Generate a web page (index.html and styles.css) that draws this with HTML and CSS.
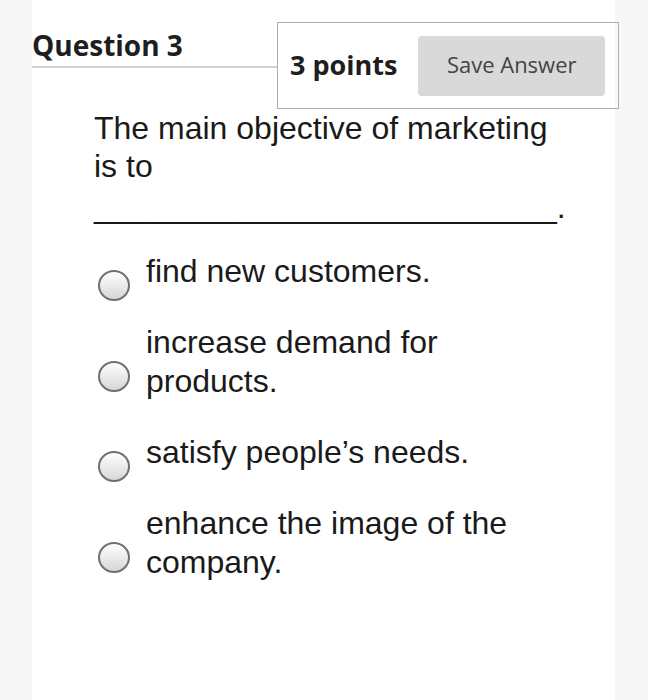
FILE: index.html
```html
<!DOCTYPE html>
<html>
<head>
<meta charset="utf-8">
<link rel="stylesheet" href="styles.css">
</head>
<body>
<div class="page">
  <div class="header">
    <h2 class="title">Question 3</h2>
    <div class="points-box">
      <span class="points">3 points</span>
      <button class="save">Save Answer</button>
    </div>
  </div>
  <div class="question">
    <p class="stem">The main objective of marketing is to</p>
    <p class="blank">__________________________.</p>
  </div>
  <ul class="options">
    <li class="option"><span class="radio"></span><span class="label">find new customers.</span></li>
    <li class="option"><span class="radio"></span><span class="label">increase demand for products.</span></li>
    <li class="option"><span class="radio"></span><span class="label">satisfy people’s needs.</span></li>
    <li class="option"><span class="radio"></span><span class="label">enhance the image of the company.</span></li>
  </ul>
</div>
</body>
</html>
```
FILE: styles.css
```css
html, body {
  margin: 0;
  padding: 0;
  background: #f7f7f7;
}
.page {
  margin-left: 32px;
  width: 583px;
  min-height: 700px;
  background: #ffffff;
  padding-top: 22px;
  box-sizing: border-box;
}
.header {
  display: flex;
  align-items: flex-start;
  margin-right: -4px;
}
.title {
  flex: 1;
  margin: 0;
  padding: 4px 0 2px 0;
  font-family: "Open Sans", sans-serif;
  font-weight: 700;
  font-size: 28px;
  line-height: 38px;
  color: #1e1e1e;
  border-bottom: 2px solid #d2d2d2;
}
.points-box {
  width: 342px;
  box-sizing: border-box;
  border: 1px solid #adadad;
  padding: 13px 13px 12px 12px;
  display: flex;
  align-items: center;
  gap: 21px;
}
.points {
  font-family: "Open Sans", sans-serif;
  font-weight: 700;
  font-size: 27px;
  color: #1e1e1e;
  margin-bottom: 4px;
}
.save {
  height: 60px;
  flex: 1;
  border: none;
  border-radius: 4px;
  background: #d9d9d9;
  font-family: "Open Sans", sans-serif;
  font-size: 22px;
  color: #444;
  padding: 0 0 4px 0;
  line-height: 56px;
}
.question {
  margin-left: 62px;
  width: 478px;
  margin-top: 0;
  font-family: "Liberation Sans", Arial, sans-serif;
  font-size: 32px;
  line-height: 38px;
  color: #1a1a1a;
}
.question p {
  margin: 0;
}
.question .blank {
  margin-top: 3px;
}
.options {
  list-style: none;
  margin: 26px 0 0 66px;
  padding: 0;
  width: 440px;
  display: flex;
  flex-direction: column;
  gap: 32px;
}
.option {
  display: flex;
  align-items: center;
  gap: 16px;
}
.radio {
  flex: none;
  width: 32px;
  height: 31px;
  box-sizing: border-box;
  border: 2px solid #707070;
  border-radius: 50%;
  background: linear-gradient(#ffffff, #d6d6d6);
  transform: translateY(14px);
}
.label {
  font-family: "Liberation Sans", Arial, sans-serif;
  font-size: 32px;
  line-height: 39px;
  color: #1a1a1a;
}
```
